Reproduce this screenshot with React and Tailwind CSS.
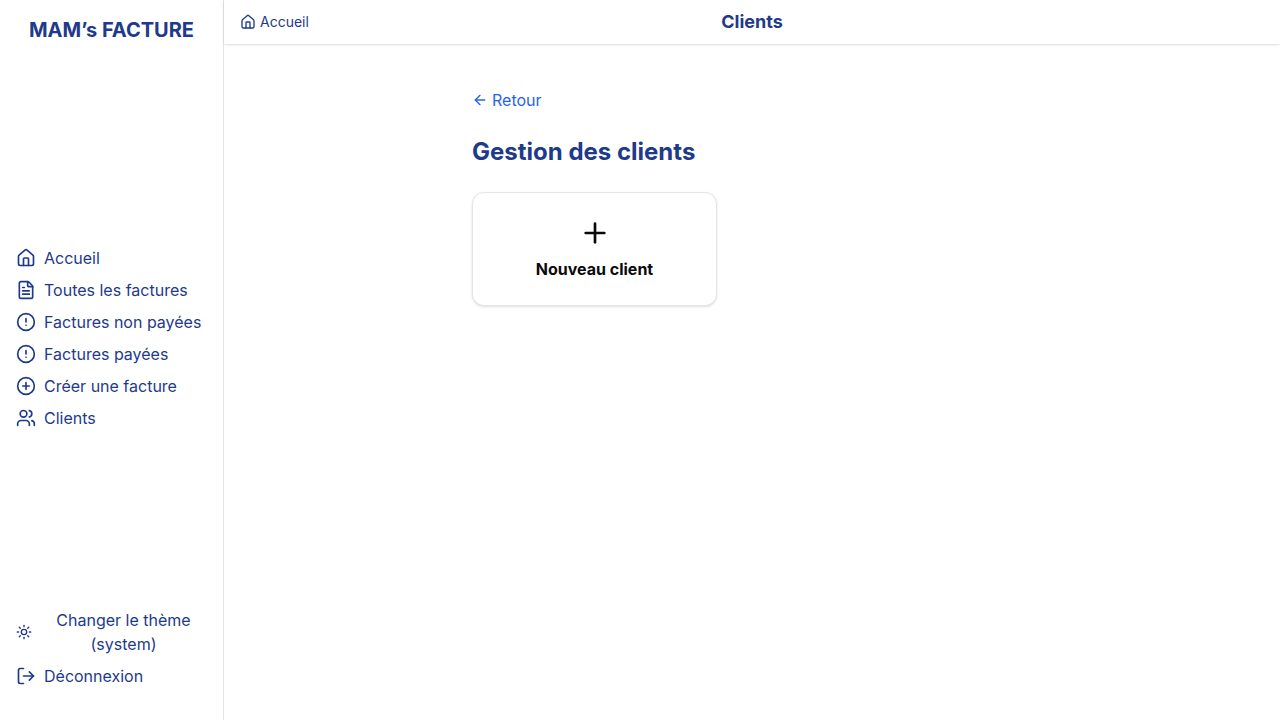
import { House, FileText, CircleAlert, CirclePlus, Users, Sun, LogOut, ArrowLeft, Plus } from "lucide-react";

const links = [
  { label: "Accueil", icon: House },
  { label: "Toutes les factures", icon: FileText },
  { label: "Factures non payées", icon: CircleAlert },
  { label: "Factures payées", icon: CircleAlert },
  { label: "Créer une facture", icon: CirclePlus },
  { label: "Clients", icon: Users },
];

function Sidebar() {
  return (
    <aside className="flex w-56 shrink-0 flex-col justify-between border-r border-neutral-200 bg-white px-4 pt-4 pb-8 text-[#1e3a8a]">
      <div className="mb-6 text-center text-xl font-bold">MAM’s FACTURE</div>
      <nav className="flex flex-col gap-2">
        {links.map(({ label, icon: Icon }) => (
          <a key={label} href="#" className="flex items-center gap-2 whitespace-nowrap">
            <Icon size={20} className="shrink-0" />
            {label}
          </a>
        ))}
      </nav>
      <div className="flex flex-col gap-2">
        <button type="button" className="flex items-center gap-2">
          <Sun size={16} className="shrink-0" />
          <span className="flex-1 text-center">Changer le thème (system)</span>
        </button>
        <button type="button" className="flex items-center gap-2">
          <LogOut size={20} className="shrink-0" />
          Déconnexion
        </button>
      </div>
    </aside>
  );
}

export default function App() {
  return (
    <div className="flex min-h-screen bg-white font-['Inter',sans-serif] text-neutral-950">
      <Sidebar />
      <div className="flex min-w-0 flex-1 flex-col">
        <header className="grid grid-cols-[1fr_auto_1fr] items-center bg-white px-4 py-2 text-[#1e3a8a] shadow-sm">
          <a href="#" className="flex items-center gap-1 text-sm">
            <House size={16} />
            Accueil
          </a>
          <h1 className="text-lg font-bold">Clients</h1>
        </header>
        <main className="mx-auto flex w-full max-w-2xl flex-1 flex-col items-start gap-6 px-14 py-11">
          <a href="#" className="flex items-center gap-1 text-[#2563eb]">
            <ArrowLeft size={16} />
            Retour
          </a>
          <h2 className="text-2xl font-bold text-[#1e3a8a]">Gestion des clients</h2>
          <button type="button" className="flex w-[245px] flex-col items-center gap-2 rounded-xl border border-neutral-200 bg-white p-6 font-bold shadow-sm">
            <Plus size={32} />
            Nouveau client
          </button>
        </main>
      </div>
    </div>
  );
}
